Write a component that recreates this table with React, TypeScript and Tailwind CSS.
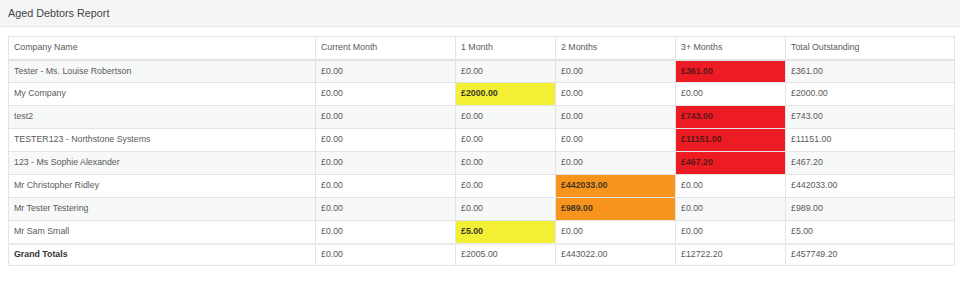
const rows: { name: string; cells: string[]; hl?: Record<number, string> }[] = [
  { name: "Tester - Ms. Louise Robertson", cells: ["£0.00", "£0.00", "£0.00", "£361.00", "£361.00"], hl: { 3: "red" } },
  { name: "My Company", cells: ["£0.00", "£2000.00", "£0.00", "£0.00", "£2000.00"], hl: { 1: "yellow" } },
  { name: "test2", cells: ["£0.00", "£0.00", "£0.00", "£743.00", "£743.00"], hl: { 3: "red" } },
  { name: "TESTER123 - Northstone Systems", cells: ["£0.00", "£0.00", "£0.00", "£11151.00", "£11151.00"], hl: { 3: "red" } },
  { name: "123 - Ms Sophie Alexander", cells: ["£0.00", "£0.00", "£0.00", "£467.20", "£467.20"], hl: { 3: "red" } },
  { name: "Mr Christopher Ridley", cells: ["£0.00", "£0.00", "£442033.00", "£0.00", "£442033.00"], hl: { 2: "orange" } },
  { name: "Mr Tester Testering", cells: ["£0.00", "£0.00", "£989.00", "£0.00", "£989.00"], hl: { 2: "orange" } },
  { name: "Mr Sam Small", cells: ["£0.00", "£5.00", "£0.00", "£0.00", "£5.00"], hl: { 1: "yellow" } },
];

const hlClass: Record<string, string> = {
  red: "bg-[#ed1c24] font-bold text-[#5a1616]",
  yellow: "bg-[#f3ef34] font-bold text-[#3a3a2a]",
  orange: "bg-[#f7941d] font-bold text-[#4a3520]",
};

const cols = ["Company Name", "Current Month", "1 Month", "2 Months", "3+ Months", "Total Outstanding"];
const widths = ["w-[307px]", "w-[140px]", "w-[100px]", "w-[120px]", "w-[110px]", "w-[169px]"];

export default function App() {
  return (
    <div className="w-[960px] h-[282px] bg-white text-[#5a5a5a] font-['Liberation_Sans',Arial,sans-serif]">
      {/* title bar */}
      <div className="h-[27px] bg-[#f5f5f5] border-b border-[#e6e6e6] px-2 flex items-center text-[10.8px] text-[#444]">
        Aged Debtors Report
      </div>

      <div className="pt-[9px] pl-2">
        <table className="border-collapse text-[8.8px] table-fixed w-[946px]">
          <thead>
            <tr className="h-[23px]">
              {cols.map((c, i) => (
                <th key={c} className={`${widths[i]} border border-[#e3e3e3] border-b-2 text-left font-normal px-[5px]`}>
                  {c}
                </th>
              ))}
            </tr>
          </thead>
          <tbody>
            {rows.map((r, ri) => (
              <tr key={r.name} className={`h-[23px] ${ri % 2 === 0 ? "bg-[#f7f8f8]" : "bg-white"}`}>
                <td className="border border-[#e3e3e3] px-[5px]">{r.name}</td>
                {r.cells.map((v, ci) => (
                  <td key={ci} className={`border border-[#e3e3e3] px-[5px] ${r.hl?.[ci] ? hlClass[r.hl[ci]] : ""}`}>
                    {v}
                  </td>
                ))}
              </tr>
            ))}
          </tbody>
          <tfoot>
            <tr className="h-[22px] bg-white">
              <td className="border border-[#e3e3e3] border-t-2 border-t-[#ececec] px-[5px] font-bold text-[#333]">Grand Totals</td>
              {["£0.00", "£2005.00", "£443022.00", "£12722.20", "£457749.20"].map((v, i) => (
                <td key={i} className="border border-[#e3e3e3] border-t-2 border-t-[#ececec] px-[5px]">
                  {v}
                </td>
              ))}
            </tr>
          </tfoot>
        </table>
      </div>
    </div>
  );
}
